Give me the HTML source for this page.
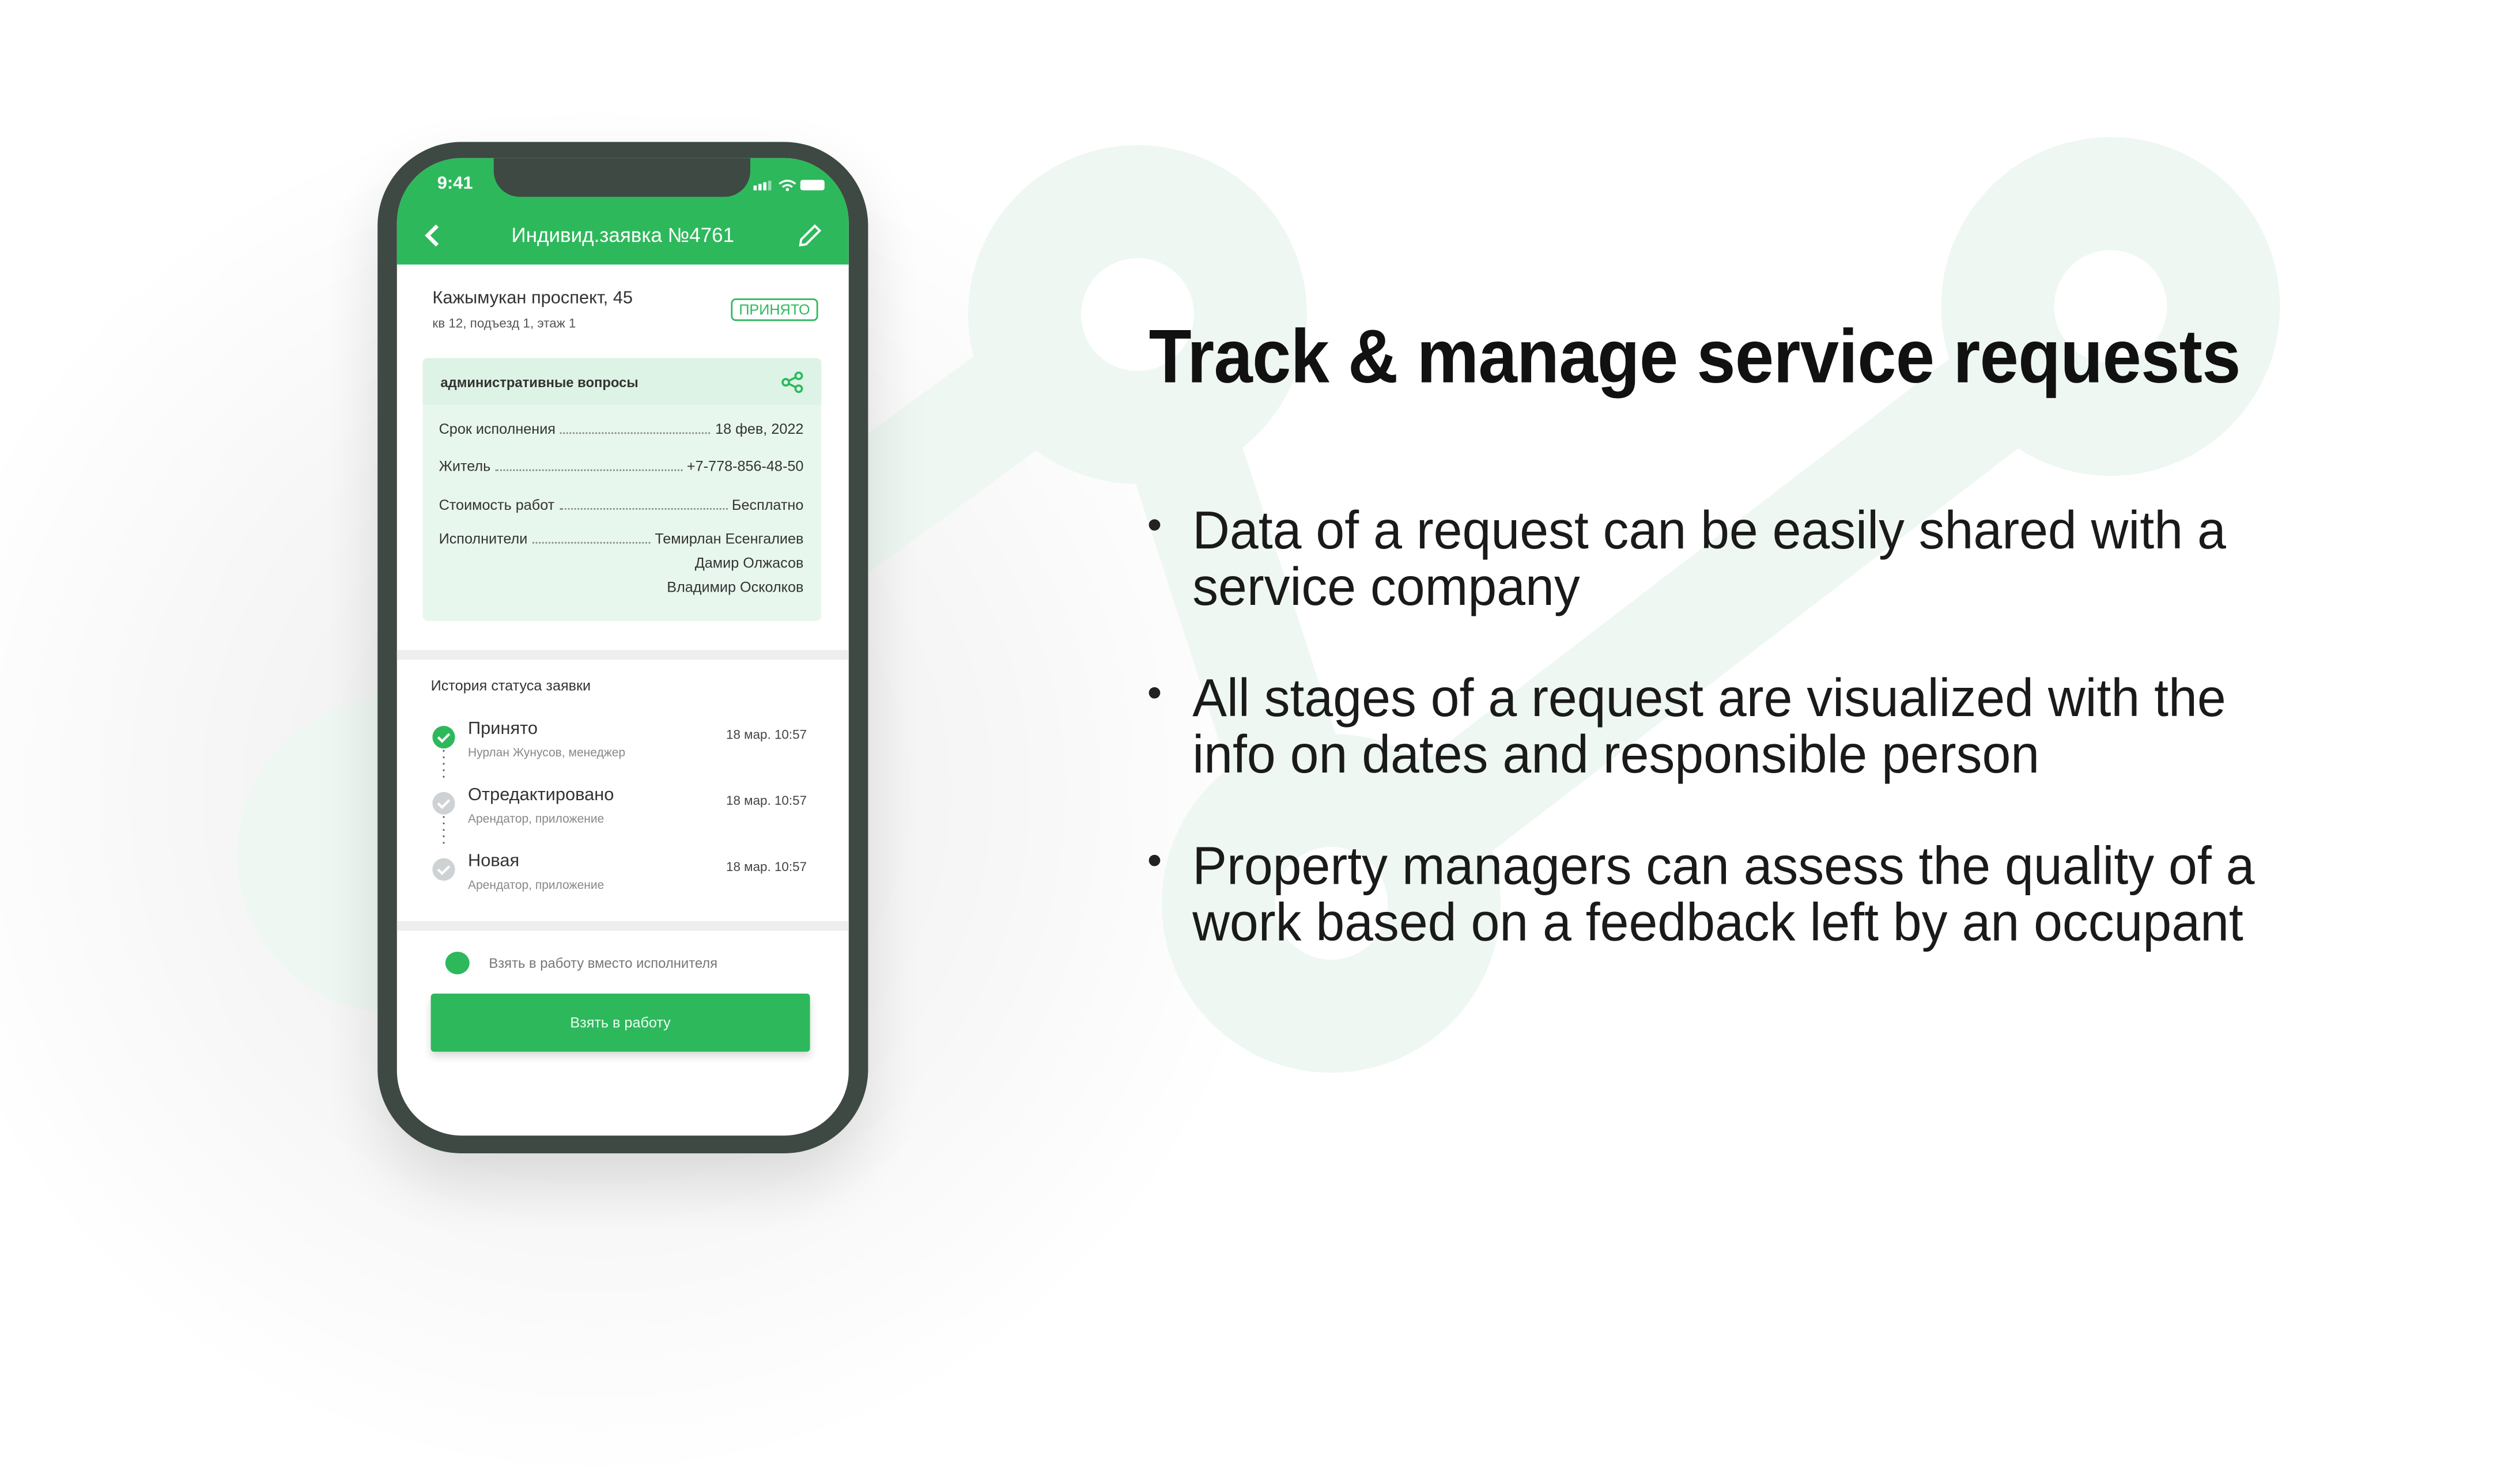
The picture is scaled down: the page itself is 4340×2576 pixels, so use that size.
<!DOCTYPE html>
<html><head><meta charset="utf-8"><style>
html,body{margin:0;padding:0;width:4340px;height:2496px;overflow:hidden;background:#fff;}
#w{position:absolute;left:0;top:0;width:1550px;height:891.43px;transform:scale(2.8);transform-origin:0 0;font-family:"Liberation Sans","DejaVu Sans",sans-serif;}
.a{position:absolute;white-space:nowrap;}
.row{position:absolute;left:272px;width:226px;display:flex;align-items:flex-end;font-size:9px;color:#333;}
.row .d{flex:1;border-bottom:1px dotted #888;margin:0 3px 2px;}
</style></head><body><div id="w">
<div class="a" style="left:-60px;top:60px;width:860px;height:860px;border-radius:50%;background:radial-gradient(closest-side,rgba(0,0,0,0.07),rgba(0,0,0,0.03) 60%,rgba(0,0,0,0) 100%);"></div>
<svg class="a" style="left:0;top:0" width="1550" height="892" viewBox="0 0 1550 892">
<g fill="#eef7f1" stroke="none">
<path d="M705 190 L240 530" stroke="#eef7f1" stroke-width="70" fill="none"/>
<path d="M705 190 L825 560" stroke="#eef7f1" stroke-width="70" fill="none"/>
<path d="M825 560 L1308 190" stroke="#eef7f1" stroke-width="70" fill="none"/>
<circle cx="705" cy="195" r="105"/>
<circle cx="1308" cy="190" r="105"/>
<circle cx="825" cy="560" r="105"/>
<circle cx="245" cy="530" r="98"/>
</g>
<g fill="#fff"><circle cx="705" cy="195" r="35"/><circle cx="1308" cy="190" r="35"/><circle cx="825" cy="560" r="35"/></g>
</svg>
<!-- phone -->
<div class="a" style="left:234px;top:88px;width:304px;height:627px;border-radius:52px;background:#3d4942;box-shadow:0 20px 40px rgba(0,0,0,0.12);"></div>
<div class="a" style="left:246px;top:98px;width:280px;height:606px;border-radius:40px;background:#fff;overflow:hidden;">
 <div class="a" style="left:0;top:0;width:280px;height:66px;background:#2eb85c;"></div>
 <div class="a" style="left:60px;top:0;width:159px;height:24px;background:#3d4942;border-radius:0 0 16px 16px;"></div>
 <div class="a" style="left:25px;top:10px;color:#fff;font-size:11px;font-weight:bold;">9:41</div>
 <svg class="a" style="left:218px;top:12px" width="50" height="10" viewBox="0 0 50 10"><rect x="3" y="5" width="2" height="3" fill="#fff"/><rect x="6" y="4" width="2" height="4" fill="#fff"/><rect x="9" y="3" width="2" height="5" fill="#fff"/><rect x="12" y="2" width="2" height="6" fill="#fff" opacity=".5"/><path d="M19 4 Q24 0 29 4 M21 6 Q24 3.5 27 6" stroke="#fff" stroke-width="1.2" fill="none"/><circle cx="24" cy="7.5" r="1" fill="#fff"/><rect x="32" y="1.5" width="15" height="6.5" rx="1.5" fill="#fff"/></svg>
 <svg class="a" style="left:16px;top:41px" width="12" height="14" viewBox="0 0 12 14"><path d="M9 1 L3 7 L9 13" stroke="#fff" stroke-width="2.4" fill="none"/></svg>
 <div class="a" style="left:0;width:280px;text-align:center;top:41px;color:#fff;font-size:12.5px;">Индивид.заявка №4761</div>
 <svg class="a" style="left:248px;top:40px" width="16" height="16" viewBox="0 0 16 16"><path d="M2 14 L2.5 10.5 L11 2 L14 5 L5.5 13.5 Z" stroke="#fff" stroke-width="1.4" fill="none"/></svg>
 <div class="a" style="left:22px;top:81px;font-size:11px;color:#333;">Кажымукан проспект, 45</div>
 <div class="a" style="left:22px;top:98px;font-size:8px;color:#555;">кв 12, подъезд 1, этаж 1</div>
 <div class="a" style="left:207px;top:87px;width:52px;height:12px;border:1.5px solid #2eb85c;border-radius:3px;color:#2eb85c;font-size:9px;text-align:center;line-height:12px;">ПРИНЯТО</div>
 <div class="a" style="left:16px;top:124px;width:247px;height:163px;background:#e8f7ee;border-radius:3px;"></div>
 <div class="a" style="left:16px;top:124px;width:247px;height:29px;background:#dcf3e5;border-radius:3px 3px 0 0;"></div>
 <div class="a" style="left:27px;top:134px;font-size:8.5px;font-weight:bold;color:#333;">административные вопросы</div>
 <svg class="a" style="left:238px;top:132px" width="14" height="14" viewBox="0 0 14 14"><g stroke="#2eb85c" stroke-width="1.3" fill="none"><circle cx="3" cy="7" r="2"/><circle cx="11" cy="3" r="2"/><circle cx="11" cy="11" r="2"/><path d="M5 6 L9 4 M5 8 L9 10"/></g></svg>
</div>
<div class="row" style="top:261px;"><span>Срок исполнения</span><span class="d"></span><span>18 фев, 2022</span></div>
<div class="row" style="top:284px;"><span>Житель</span><span class="d"></span><span>+7-778-856-48-50</span></div>
<div class="row" style="top:308px;"><span>Стоимость работ</span><span class="d"></span><span>Бесплатно</span></div>
<div class="row" style="top:329px;"><span>Исполнители</span><span class="d"></span><span>Темирлан Есенгалиев</span></div>
<div class="a" style="right:1052px;top:344px;font-size:9px;color:#333;">Дамир Олжасов</div>
<div class="a" style="right:1052px;top:359px;font-size:9px;color:#333;">Владимир Осколков</div>
<div class="a" style="left:246px;top:403px;width:280px;height:6px;background:#eceef0;"></div>
<div class="a" style="left:267px;top:420px;font-size:9px;color:#333;">История статуса заявки</div>
<svg class="a" style="left:264px;top:446px" width="24" height="110" viewBox="0 0 24 110"><g stroke="#555" stroke-width="1" stroke-dasharray="1 3"><path d="M11 19 L11 36 M11 60 L11 77"/></g>
<circle cx="11" cy="11" r="7" fill="#2eb85c"/><circle cx="11" cy="52" r="7" fill="#cfd2d4"/><circle cx="11" cy="93" r="7" fill="#cfd2d4"/>
<g stroke="#fff" stroke-width="1.5" fill="none"><path d="M7.5 11 L10 13.5 L14.5 9"/><path d="M7.5 52 L10 54.5 L14.5 50"/><path d="M7.5 93 L10 95.5 L14.5 91"/></g></svg>
<div class="a" style="left:290px;top:446px;font-size:11px;color:#333;">Принято</div>
<div class="a" style="left:290px;top:462px;font-size:7.5px;color:#888;">Нурлан Жунусов, менеджер</div>
<div class="a" style="left:290px;top:487px;font-size:11px;color:#333;">Отредактировано</div>
<div class="a" style="left:290px;top:503px;font-size:7.5px;color:#888;">Арендатор, приложение</div>
<div class="a" style="left:290px;top:528px;font-size:11px;color:#333;">Новая</div>
<div class="a" style="left:290px;top:544px;font-size:7.5px;color:#888;">Арендатор, приложение</div>
<div class="a" style="right:1050px;top:451px;font-size:8px;color:#444;">18 мар. 10:57</div>
<div class="a" style="right:1050px;top:492px;font-size:8px;color:#444;">18 мар. 10:57</div>
<div class="a" style="right:1050px;top:533px;font-size:8px;color:#444;">18 мар. 10:57</div>
<div class="a" style="left:246px;top:571px;width:280px;height:6px;background:#eceef0;"></div>
<div class="a" style="left:276px;top:590px;width:15px;height:14px;border-radius:50%;background:#2eb85c;"></div>
<div class="a" style="left:303px;top:592px;font-size:8.5px;color:#777;">Взять в работу вместо исполнителя</div>
<div class="a" style="left:267px;top:616px;width:235px;height:36px;background:#2eb85c;border-radius:2px;box-shadow:0 3px 5px rgba(0,0,0,0.15);color:#e8fff0;font-size:9px;text-align:center;line-height:36px;">Взять в работу</div>
<!-- text -->
<div class="a" style="left:712px;top:193px;font-size:47px;font-weight:bold;color:#111;transform:scaleX(0.92);transform-origin:0 0;letter-spacing:-0.3px;">Track &amp; manage service requests</div>
<div class="a" style="left:711px;top:310px;font-size:26px;color:#222;">•</div>
<div class="a" style="left:711px;top:414px;font-size:26px;color:#222;">•</div>
<div class="a" style="left:711px;top:518px;font-size:26px;color:#222;">•</div>
<div class="a" style="left:739px;top:311px;font-size:33px;line-height:35px;color:#1a1a1a;transform:scaleX(0.97);transform-origin:0 0;">Data of a request can be easily shared with a<br>service company</div>
<div class="a" style="left:739px;top:415px;font-size:33px;line-height:35px;color:#1a1a1a;transform:scaleX(0.97);transform-origin:0 0;">All stages of a request are visualized with the<br>info on dates and responsible person</div>
<div class="a" style="left:739px;top:519px;font-size:33px;line-height:35px;color:#1a1a1a;transform:scaleX(0.97);transform-origin:0 0;">Property managers can assess the quality of a<br>work based on a feedback left by an occupant</div>
</div></body></html>
